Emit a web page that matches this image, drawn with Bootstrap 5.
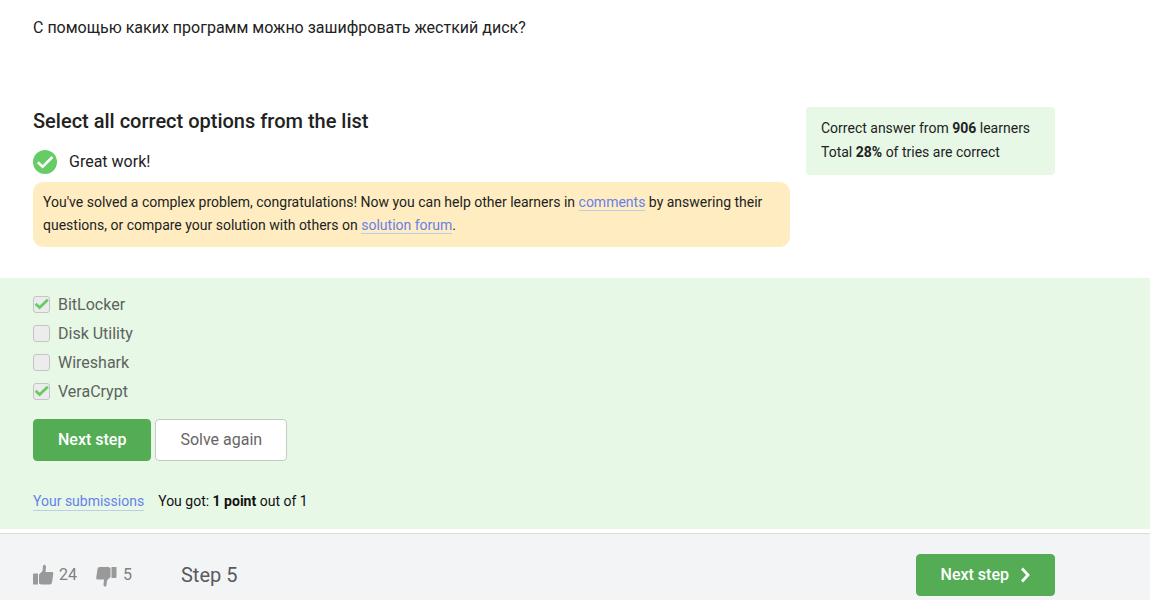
<!DOCTYPE html>
<html lang="en">
<head>
<meta charset="utf-8">
<meta name="viewport" content="width=device-width, initial-scale=1">
<title>Step 5</title>
<link href="https://cdn.jsdelivr.net/npm/bootstrap@5.3.0/dist/css/bootstrap.min.css" rel="stylesheet">
<style>
  body { font-family: Roboto, "Liberation Sans", sans-serif; font-size: 16px; line-height: 24px; color: #222; background: #fff; }
  .lesson-pad { padding-left: 33px; padding-right: 95px; }
  .question { padding-top: 16px; padding-bottom: 67px; }
  .quiz-head { gap: 16px; padding-bottom: 31px; }
  .quiz-title { font-size: 20px; line-height: 28px; font-weight: 500; margin-bottom: 15px; }
  .verdict { gap: 12px; margin-bottom: 8px; }
  .hint { background: #ffedc1; border-radius: 10px; padding: 9px 10px 10px; font-size: 14px; line-height: 23px; }
  .soft-link { color: #6680ec; text-decoration: none; border-bottom: 1px solid #b9cfe6; }
  .stats { flex: 0 0 249px; background: #e7f8e7; border-radius: 4px; padding: 9px 0 11px 15px; font-size: 14px; }
  .answers { background: #e7f8e7; padding-top: 12px; padding-bottom: 16px; }
  .option { gap: 8px; height: 29px; color: #5c635c; }
  .option .form-check-input { width: 17px; height: 17px; margin: 0; border: 1px solid #c3c6c3; border-radius: 3px; background-color: #ececec; opacity: 1; }
  .option .form-check-input:checked { background-color: #ececec; border-color: #c3c6c3; background-size: 100%;
    background-image: url("data:image/svg+xml,%3Csvg xmlns='http://www.w3.org/2000/svg' viewBox='0 0 15 15'%3E%3Cpath d='M1.6 6.8L5.6 10.6L13.8 2.8' fill='none' stroke='%2366cc66' stroke-width='2.7'/%3E%3C/svg%3E"); }
  .option .form-check-input:disabled ~ .form-check-label { opacity: 1; }
  .step-btn { height: 42px; padding: 0 24px; border-radius: 4px; font-size: 16px; line-height: 24px; }
  .step-btn.btn-success { --bs-btn-bg: #54ad54; --bs-btn-border-color: #54ad54; font-weight: 500; }
  .step-btn.btn-light { --bs-btn-bg: #fff; --bs-btn-border-color: #c3cbc3; --bs-btn-color: #666; }
  .button-row { gap: 4px; margin-top: 13px; margin-bottom: 28px; }
  .result { gap: 14px; font-size: 14px; color: #111; }
  .result .soft-link { line-height: 17px; }
  .step-footer { background: #f3f4f6; border-top: 1px solid #dadddc; margin-top: 4px; padding-top: 20px; padding-bottom: 4px; }
  .vote { color: #808080; background: none; gap: 5px; }
  .votes { gap: 19px; }
  .step-name { font-size: 20px; color: #5a5a5e; margin-left: 49px; }
  .next-label { gap: 4px; }
</style>
</head>
<body class="d-flex flex-column min-vh-100">
<main>
  <p class="question lesson-pad mb-0">С помощью каких программ можно зашифровать жесткий диск?</p>

  <section class="quiz-head lesson-pad d-flex align-items-start">
    <div class="flex-grow-1">
      <h1 class="quiz-title">Select all correct options from the list</h1>
      <div class="verdict d-flex align-items-center">
        <svg width="24" height="24" viewBox="0 0 24 24" aria-hidden="true"><circle cx="12" cy="12" r="12" fill="#66cc66"/><path d="M4.800 12.300L9.600 16.800L19.400 7" fill="none" stroke="#fff" stroke-width="2.600"/></svg>
        <span>Great work!</span>
      </div>
      <div class="hint">You've solved a complex problem, congratulations! Now you can help other learners in <a href="#comments" class="soft-link">comments</a> by answering their questions, or compare your solution with others on <a href="#solutions" class="soft-link">solution forum</a>.</div>
    </div>
    <aside class="stats">
      <div>Correct answer from <b>906</b> learners</div>
      <div>Total <b>28%</b> of tries are correct</div>
    </aside>
  </section>

  <section class="answers lesson-pad">
    <div class="option d-flex align-items-center"><input class="form-check-input" type="checkbox" id="opt1" checked disabled><label class="form-check-label" for="opt1">BitLocker</label></div>
    <div class="option d-flex align-items-center"><input class="form-check-input" type="checkbox" id="opt2" disabled><label class="form-check-label" for="opt2">Disk Utility</label></div>
    <div class="option d-flex align-items-center"><input class="form-check-input" type="checkbox" id="opt3" disabled><label class="form-check-label" for="opt3">Wireshark</label></div>
    <div class="option d-flex align-items-center"><input class="form-check-input" type="checkbox" id="opt4" checked disabled><label class="form-check-label" for="opt4">VeraCrypt</label></div>
    <div class="button-row d-flex">
      <button type="button" class="btn btn-success step-btn">Next step</button>
      <button type="button" class="btn btn-light step-btn">Solve again</button>
    </div>
    <div class="result d-flex align-items-baseline">
      <a href="#submissions" class="soft-link">Your submissions</a>
      <span>You got: <b>1 point</b> out of 1</span>
    </div>
  </section>
</main>

<footer class="step-footer lesson-pad flex-grow-1">
  <div class="d-flex align-items-center">
    <div class="votes d-flex">
      <button type="button" class="vote border-0 p-0 d-flex align-items-center" aria-label="Like, 24">
        <svg width="21" height="22" viewBox="0 0 21 22" fill="#999" aria-hidden="true"><path d="M0 10.500Q0 9.500 1 9.500H5V20.500H0ZM6 10.500L9.500 7L10 2Q10.300 .800 11.500 .800Q13 1 13 3L12.500 8H19Q20.500 8 20.300 9.500L19 18.500Q18.700 20.500 16.800 20.500H8L6 19.500Z"/></svg>
        <span>24</span>
      </button>
      <button type="button" class="vote border-0 p-0 d-flex align-items-center" aria-label="Dislike, 5">
        <svg width="22" height="24" viewBox="0 0 22 24" fill="#999" aria-hidden="true"><path d="M15.500 4H20.500V14Q20.500 15 19.500 15H15.500ZM14.500 14L11 17.500L10.500 22Q10.200 23.700 9 23.700Q7.200 23.500 7.500 21.500L8 16.500H1.500Q0 16.500 .200 15L1.500 6Q1.800 4 3.700 4H12.500L14.500 5Z"/></svg>
        <span>5</span>
      </button>
    </div>
    <span class="step-name">Step 5</span>
    <button type="button" class="btn btn-success step-btn next-label ms-auto d-flex align-items-center">
      <span>Next step</span>
      <svg width="17" height="18" viewBox="0 0 17 18" aria-hidden="true"><path d="M9 2.500L15 9L9 15.500" fill="none" stroke="#fff" stroke-width="2.800"/></svg>
    </button>
  </div>
</footer>
<script src="https://cdn.jsdelivr.net/npm/bootstrap@5.3.0/dist/js/bootstrap.bundle.min.js"></script>
</body>
</html>
